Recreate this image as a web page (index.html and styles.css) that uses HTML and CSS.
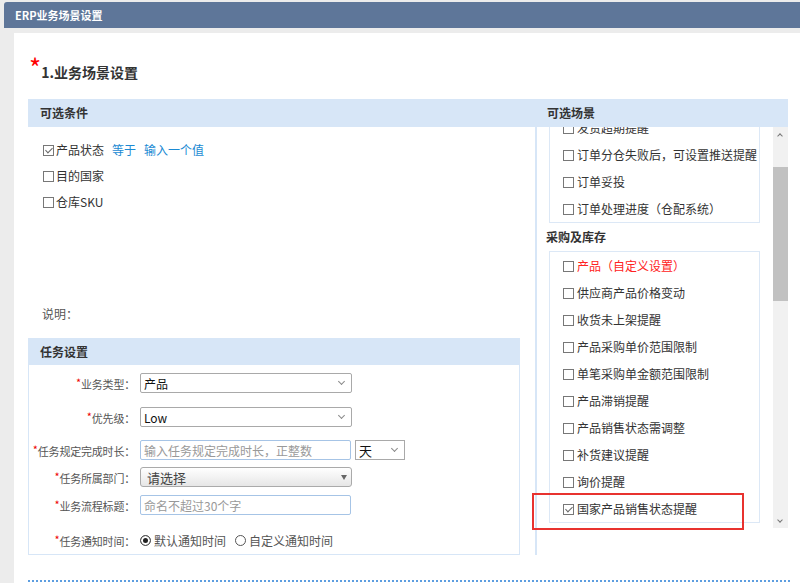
FILE: index.html
```html
<!DOCTYPE html>
<html lang="zh-CN">
<head>
  <meta charset="UTF-8">
  <title>ERP业务场景设置</title>
  <link rel="stylesheet" href="styles.css">
</head>
<body>
  <div class="window-title">ERP业务场景设置</div>

  <div class="panel">
    <h2 class="page-title"><span class="req">*</span>1.业务场景设置</h2>

    <div class="scene">
      <!-- 左侧：可选条件 + 任务设置 -->
      <div class="scene-left">
        <div class="bar">可选条件</div>
        <ul class="cond-list">
          <li><label class="chk"><input type="checkbox" checked>产品状态</label><a class="op">等于</a><a class="op">输入一个值</a></li>
          <li><label class="chk"><input type="checkbox">目的国家</label></li>
          <li><label class="chk"><input type="checkbox">仓库SKU</label></li>
        </ul>
        <div class="note">说明：</div>

        <div class="task-box">
          <div class="bar bar-sm">任务设置</div>
          <div class="form">
            <div class="form-row row-first">
              <label class="form-label"><span class="req-s">*</span>业务类型：</label>
              <span class="select-wrap">
                <select class="field-select"><option>产品</option></select>
              </span>
            </div>
            <div class="form-row">
              <label class="form-label"><span class="req-s">*</span>优先级：</label>
              <span class="select-wrap">
                <select class="field-select"><option>Low</option></select>
              </span>
            </div>
            <div class="form-row row-mid">
              <label class="form-label"><span class="req-s">*</span>任务规定完成时长：</label>
              <input class="text-input" type="text" placeholder="输入任务规定完成时长，正整数">
              <span class="select-wrap unit">
                <select class="field-select unit-select"><option>天</option></select>
              </span>
            </div>
            <div class="form-row row-tight">
              <label class="form-label"><span class="req-s">*</span>任务所属部门：</label>
              <span class="select-wrap dept">
                <select class="field-select dept-select"><option>请选择</option></select>
              </span>
            </div>
            <div class="form-row row-tight">
              <label class="form-label"><span class="req-s">*</span>业务流程标题：</label>
              <input class="text-input" type="text" placeholder="命名不超过30个字">
            </div>
            <div class="form-row row-last">
              <label class="form-label"><span class="req-s">*</span>任务通知时间：</label>
              <label class="radio"><input type="radio" name="notify" checked>默认通知时间</label>
              <label class="radio"><input type="radio" name="notify">自定义通知时间</label>
            </div>
          </div>
        </div>
      </div>

      <!-- 右侧：可选场景 -->
      <div class="scene-right">
        <div class="bar">可选场景</div>
        <div class="scroll-area">
          <div class="scene-list">
            <ul class="group-box cut">
              <li><label class="chk"><input type="checkbox">发货超期提醒</label></li>
              <li><label class="chk"><input type="checkbox">订单分仓失败后，可设置推送提醒</label></li>
              <li><label class="chk"><input type="checkbox">订单妥投</label></li>
              <li><label class="chk"><input type="checkbox">订单处理进度（仓配系统）</label></li>
            </ul>
            <div class="group-title">采购及库存</div>
            <ul class="group-box">
              <li><label class="chk custom"><input type="checkbox">产品（自定义设置）</label></li>
              <li><label class="chk"><input type="checkbox">供应商产品价格变动</label></li>
              <li><label class="chk"><input type="checkbox">收货未上架提醒</label></li>
              <li><label class="chk"><input type="checkbox">产品采购单价范围限制</label></li>
              <li><label class="chk"><input type="checkbox">单笔采购单金额范围限制</label></li>
              <li><label class="chk"><input type="checkbox">产品滞销提醒</label></li>
              <li><label class="chk"><input type="checkbox">产品销售状态需调整</label></li>
              <li><label class="chk"><input type="checkbox">补货建议提醒</label></li>
              <li><label class="chk"><input type="checkbox">询价提醒</label></li>
              <li><label class="chk"><input type="checkbox" checked>国家产品销售状态提醒</label></li>
            </ul>
          </div>
          <div class="scrollbar">
            <span class="sb-btn sb-up"></span>
            <div class="sb-track"><div class="sb-thumb"></div></div>
            <span class="sb-btn sb-down"></span>
          </div>
        </div>
      </div>

      <div class="highlight"></div>
    </div>

    <div class="divider"></div>
  </div>
</body>
</html>
```

FILE: styles.css
```css
html, body {
  height: 100%;
  overflow: hidden;
}

body {
  margin: 0;
  background-color: #ececec;
  font-family: "Noto Sans CJK SC", sans-serif;
  font-size: 12px;
  color: #333;
}

/* 顶部标题栏 */
.window-title {
  margin: 2px 0 0 4px;
  height: 26px;
  line-height: 26px;
  padding-left: 11px;
  background-color: #5e7699;
  color: #fff;
  font-size: 11px;
  font-weight: bold;
  border-radius: 3px 0 0 0;
}

.panel {
  margin: 5px 0 0 14px;
  padding: 27px 0 0 14px;
  background-color: #fff;
  height: calc(100% - 33px);
  box-sizing: border-box;
}

.page-title {
  margin: 0;
  font-size: 14px;
  font-weight: bold;
  line-height: 24px;
  color: #333;
}

.req {
  display: inline-block;
  color: #f00;
  font-size: 26px;
  line-height: 26px;
  vertical-align: top;
  margin: -6px 0 0 1px;
  font-weight: normal;
}

.scene {
  position: relative;
  display: flex;
  width: 760px;
  margin-top: 15px;
}

.bar {
  height: 28px;
  line-height: 28px;
  padding-left: 12px;
  background-color: #d7e6f7;
  font-weight: bold;
  color: #333;
}

.bar-sm {
  height: 26px;
  line-height: 26px;
  padding-left: 11px;
}

/* 左侧 */
.scene-left {
  width: 507px;
}

.cond-list {
  list-style: none;
  margin: 0;
  padding: 10px 15px 0;
  height: 173px;
  box-sizing: border-box;
}

.cond-list li {
  line-height: 26px;
}

.op {
  color: #1b8ad3;
  margin-left: 8px;
  cursor: pointer;
}

.note {
  line-height: 28px;
  padding-left: 14px;
  color: #555;
}

.task-box {
  margin-top: 10px;
  width: 492px;
  box-sizing: border-box;
  border: 1px solid #d7e6f7;
  padding-bottom: 4px;
}

.form-row {
  display: flex;
  align-items: center;
  height: 20px;
  margin-top: 14px;
}

.form-row.row-first { margin-top: 8px; }
.form-row.row-mid { margin-top: 13px; }
.form-row.row-tight { margin-top: 7px; }
.form-row.row-tight + .row-tight { margin-top: 8px; }
.form-row.row-last { margin-top: 15px; }

.form-label {
  width: 111px;
  box-sizing: border-box;
  padding-right: 5px;
  text-align: right;
  font-size: 11px;
  color: #555;
  white-space: nowrap;
  letter-spacing: -0.2px;
}

.req-s {
  color: #e00;
  font-size: 11px;
  vertical-align: 2px;
}

.select-wrap {
  position: relative;
  display: inline-block;
}

.select-wrap::after {
  content: "";
  position: absolute;
  right: 8px;
  top: 6px;
  width: 4px;
  height: 4px;
  border-right: 1px solid #8a8a8a;
  border-bottom: 1px solid #8a8a8a;
  transform: rotate(45deg);
  pointer-events: none;
}

.field-select {
  appearance: none;
  -webkit-appearance: none;
  width: 212px;
  height: 20px;
  box-sizing: border-box;
  border: 1px solid #a9a9a9;
  border-radius: 2px;
  padding: 0 3px;
  background-color: #fff;
  font-family: "Noto Sans CJK SC", sans-serif;
  font-size: 12px;
  color: #111;
}

.select-wrap.unit {
  margin-left: 4px;
}

.unit-select {
  width: 50px;
  border-radius: 0;
  font-size: 13px;
}

.dept-select {
  border-radius: 3px;
  border-color: #aaa;
  background: linear-gradient(#fff, #e6e6e6);
  padding-left: 6px;
  font-size: 13px;
  color: #444;
}

.select-wrap.dept::after {
  right: 5px;
  top: 8px;
  width: 0;
  height: 0;
  border-left: 3px solid transparent;
  border-right: 3px solid transparent;
  border-top: 5px solid #666;
  border-bottom: 0;
  transform: none;
}

.text-input {
  width: 211px;
  height: 20px;
  box-sizing: border-box;
  border: 1px solid #a6c4e6;
  border-radius: 2px;
  padding: 0 3px;
  font-family: "Noto Sans CJK SC", sans-serif;
  font-size: 12px;
  color: #333;
  outline: none;
}

.text-input::placeholder {
  color: #999;
}

.radio {
  display: inline-flex;
  align-items: center;
  color: #555;
  margin-right: 9px;
}

.radio:first-of-type {
  margin-left: 4px;
}

.radio input {
  appearance: none;
  -webkit-appearance: none;
  width: 11px;
  height: 11px;
  margin: 0 3px 0 0;
  border: 1px solid #555;
  border-radius: 50%;
  background-color: #fff;
}

.radio input:checked {
  background-color: #222;
  box-shadow: inset 0 0 0 2px #fff;
}

/* 复选框 */
.chk {
  white-space: nowrap;
}

.chk input {
  appearance: none;
  -webkit-appearance: none;
  position: relative;
  width: 11px;
  height: 11px;
  margin: 0 2px 0 0;
  border: 1px solid #777;
  background-color: #fff;
  vertical-align: -1px;
}

.chk input:checked::after {
  content: "";
  position: absolute;
  left: 3px;
  top: 0;
  width: 3px;
  height: 6px;
  border: solid #666;
  border-width: 0 1px 1px 0;
  transform: rotate(45deg);
}

.chk.custom {
  color: #f22;
}

/* 右侧 */
.scene-right {
  width: 253px;
  box-sizing: border-box;
  border-left: 2px solid #d7e6f7;
}

.scene-right .bar {
  padding-left: 10px;
}

.scroll-area {
  display: flex;
  height: 401px;
}

.scene-list {
  flex: 1;
  overflow: hidden;
  padding: 0 13px 0 12px;
}

.group-box {
  list-style: none;
  margin: 0;
  padding: 0;
  border: 1px solid #dce8f6;
}

.group-box.cut {
  margin-top: -14px;
}

.group-box li {
  line-height: 27px;
  padding-left: 13px;
}

.group-box .chk input {
  margin-right: 3px;
}

.group-title {
  line-height: 28px;
  font-weight: bold;
  margin-left: -3px;
}

.scrollbar {
  width: 15px;
  display: flex;
  flex-direction: column;
  background-color: #f1f1f1;
}

.sb-btn {
  position: relative;
  height: 14px;
}

.sb-btn::after {
  content: "";
  position: absolute;
  left: 5px;
  width: 3px;
  height: 3px;
  border-left: 1px solid #777;
  border-top: 1px solid #777;
}

.sb-up::after {
  top: 7px;
  transform: rotate(45deg);
}

.sb-down::after {
  top: 4px;
  transform: rotate(225deg);
}

.sb-track {
  flex: 1;
}

.sb-thumb {
  margin-top: 26px;
  height: 134px;
  background-color: #c1c1c1;
}

/* 标注框 */
.highlight {
  position: absolute;
  left: 504px;
  top: 394px;
  width: 212px;
  height: 37px;
  box-sizing: border-box;
  border: 2px solid #e8322f;
  pointer-events: none;
}

.divider {
  width: 762px;
  margin-top: 25px;
  border-top: 2px dotted #5d9ee0;
}
```
